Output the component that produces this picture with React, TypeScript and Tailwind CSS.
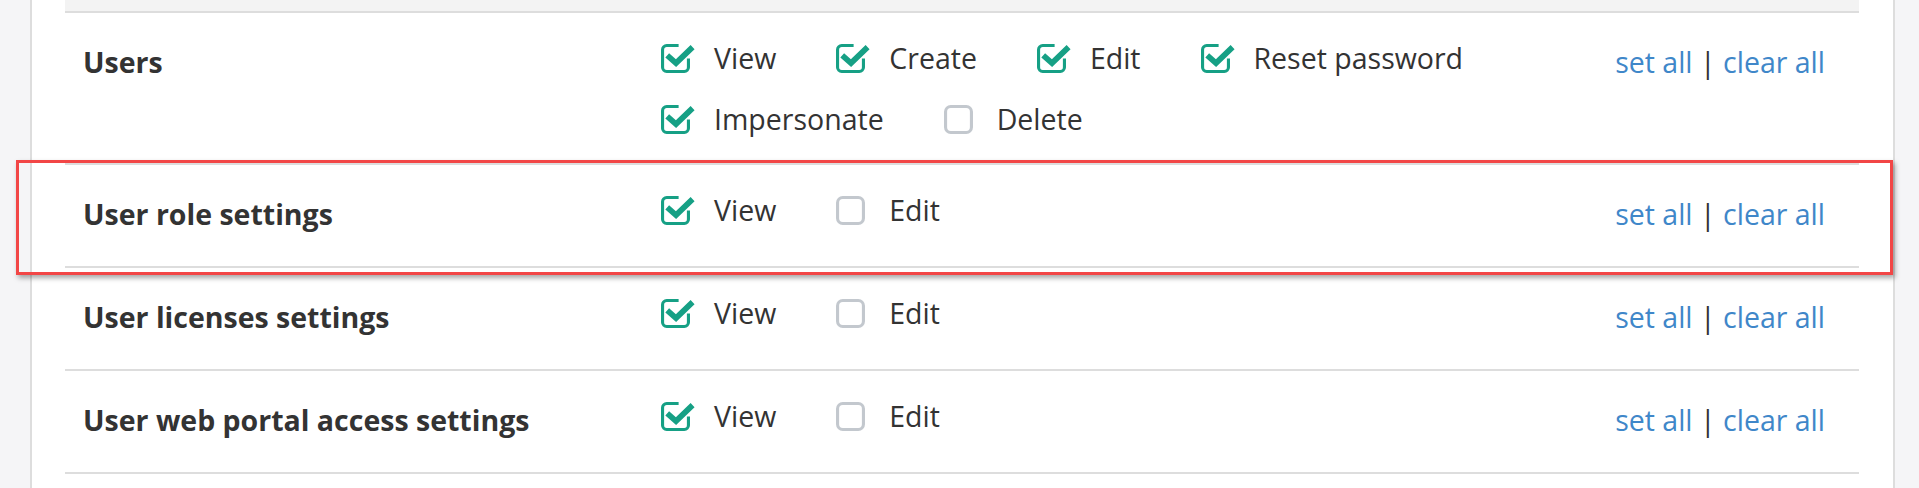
import React from "react";

type Perm = { label: string; checked: boolean };

interface RowProps {
  title: string;
  perms: Perm[];
}

const rows: RowProps[] = [
  {
    title: "Users",
    perms: [
      { label: "View", checked: true },
      { label: "Create", checked: true },
      { label: "Edit", checked: true },
      { label: "Reset password", checked: true },
      { label: "Impersonate", checked: true },
      { label: "Delete", checked: false },
    ],
  },
  {
    title: "User role settings",
    perms: [
      { label: "View", checked: true },
      { label: "Edit", checked: false },
    ],
  },
  {
    title: "User licenses settings",
    perms: [
      { label: "View", checked: true },
      { label: "Edit", checked: false },
    ],
  },
  {
    title: "User web portal access settings",
    perms: [
      { label: "View", checked: true },
      { label: "Edit", checked: false },
    ],
  },
];

const CheckedIcon = () => (
  <svg width="29" height="29" viewBox="0 0 28 28" className="shrink-0 overflow-visible">
    <path
      d="M17 1.5H5.5a4 4 0 0 0-4 4v17a4 4 0 0 0 4 4h17a4 4 0 0 0 4-4V14"
      fill="none"
      stroke="#16a085"
      strokeWidth="3"
    />
    <path d="M6 11l8.5 7.5L30.5 3" fill="none" stroke="#16a085" strokeWidth="5.5" />
  </svg>
);

const EmptyIcon = () => (
  <svg width="29" height="29" viewBox="0 0 28 28" className="shrink-0">
    <rect x="1.5" y="1.5" width="25" height="25" rx="5" fill="none" stroke="#c3c8ce" strokeWidth="3" />
  </svg>
);

const PermRow = ({ title, perms }: RowProps) => (
  <div className="grid min-h-[103px] grid-cols-[596px_1fr_auto] border-b-2 border-[#dddddd]">
    <div className="pt-[30px] pl-[18px] text-[28.5px] leading-[38px] font-bold text-[#333333]">
      {title}
    </div>

    <div className="flex flex-wrap content-start gap-x-[60px] pt-[15px] pb-[13px]">
      {perms.map((p) => (
        <label key={p.label} className="flex h-[61px] items-center gap-[24px] text-[28.5px] text-[#333333]">
          {p.checked ? <CheckedIcon /> : <EmptyIcon />}
          <span>{p.label}</span>
        </label>
      ))}
    </div>

    <div className="pt-[30px] pr-[34px] text-[28.5px] leading-[38px] whitespace-pre text-[#3f87c9]">
      <a href="#">set all</a>
      <span className="text-[#333333]"> | </span>
      <a href="#">clear all</a>
    </div>
  </div>
);

export default function App() {
  return (
    <div className="relative h-[488px] overflow-hidden bg-[#f5f5f7] font-['Open_Sans',sans-serif]">
      <div className="mr-[24px] ml-[30px] h-full border-x-2 border-[#dddddd] bg-white pr-[34px] pl-[33px]">
        <div className="h-[13px] border-b-2 border-[#dddddd] bg-[#f3f3f3]" />
        {rows.map((r) => (
          <PermRow key={r.title} {...r} />
        ))}
      </div>

      {/* highlight annotation */}
      <div className="pointer-events-none absolute top-[160px] left-[16px] h-[115px] w-[1877px] border-[3px] border-[#f24646] shadow-[2px_3px_5px_rgba(0,0,0,0.35)]" />
    </div>
  );
}
